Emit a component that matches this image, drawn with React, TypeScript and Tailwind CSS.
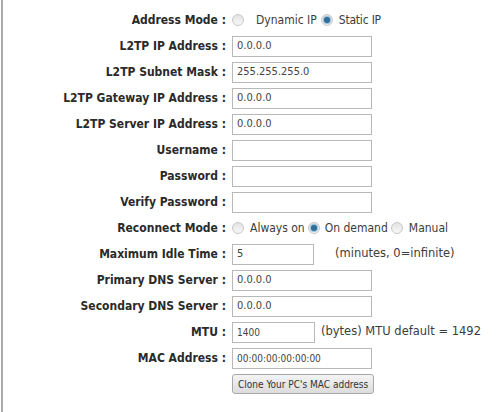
import React from "react";

const font = { fontFamily: '"DejaVu Sans Condensed", "DejaVu Sans", Tahoma, sans-serif' };
const wide = { fontFamily: '"DejaVu Sans", Verdana, sans-serif' };

function Radio({ checked }: { checked?: boolean }) {
  return (
    <span className="inline-flex h-[12px] w-[12px] shrink-0 items-center justify-center rounded-full border border-[#c8c8c8] bg-gradient-to-b from-[#e2e2e2] to-[#f8f8f8]">
      {checked ? <span className="h-[6px] w-[6px] rounded-full bg-[#2e6f9a] shadow-[0_0_1px_1px_#8fb8d6]" /> : null}
    </span>
  );
}

function Input({ value = "", w = "w-[140px]", small }: { value?: string; w?: string; small?: boolean }) {
  return (
    <div className={`${w} flex h-[21px] items-center border border-[#b8b8b8] bg-white pl-[4px] ${small ? "text-[10px]" : "text-[11px]"} text-[#444]`}>
      {value}
    </div>
  );
}

function Row({ label, children }: { label?: string; children: React.ReactNode }) {
  return (
    <div className="flex h-[26px] items-center">
      <div className="w-[223px] shrink-0 text-right text-[12px] font-bold text-[#2a2a2a]">{label}</div>
      <div className="ml-[6px] flex items-center whitespace-nowrap text-[12px] text-[#3c3c3c]">{children}</div>
    </div>
  );
}

export default function App() {
  return (
    <div className="h-[412px] w-[504px] overflow-hidden bg-white" style={font}>
      <div className="ml-[1px] h-full border-l-[2px] border-[#aaa] pt-[7px]">
        <Row label="Address Mode :">
          <Radio />
          <span className="ml-[12px] mr-[4px]">Dynamic IP</span>
          <Radio checked />
          <span className="ml-[6px] tracking-[-0.2px]">Static IP</span>
        </Row>
        <Row label="L2TP IP Address :"><Input value="0.0.0.0" /></Row>
        <Row label="L2TP Subnet Mask :"><Input value="255.255.255.0" /></Row>
        <Row label="L2TP Gateway IP Address :"><Input value="0.0.0.0" /></Row>
        <Row label="L2TP Server IP Address :"><Input value="0.0.0.0" /></Row>
        <Row label="Username :"><Input /></Row>
        <Row label="Password :"><Input /></Row>
        <Row label="Verify Password :"><Input /></Row>
        <Row label="Reconnect Mode :">
          <Radio />
          <span className="ml-[6px] mr-[3px]">Always on</span>
          <Radio checked />
          <span className="ml-[5px] mr-[3px]">On demand</span>
          <Radio />
          <span className="ml-[6px]">Manual</span>
        </Row>
        <Row label="Maximum Idle Time :">
          <Input value="5" w="w-[82px]" />
          <span className="ml-[21px] text-[11.5px]" style={wide}>(minutes, 0=infinite)</span>
        </Row>
        <Row label="Primary DNS Server :"><Input value="0.0.0.0" /></Row>
        <Row label="Secondary DNS Server :"><Input value="0.0.0.0" /></Row>
        <Row label="MTU :">
          <Input value="1400" w="w-[83px]" small />
          <span className="ml-[6px] text-[11.5px]" style={wide}>(bytes) MTU default = 1492</span>
        </Row>
        <Row label="MAC Address :"><Input value="00:00:00:00:00:00" small /></Row>
        <Row>
          <button className="flex h-[20px] items-center rounded-[3px] border border-[#a8a8a8] bg-gradient-to-b from-[#f4f4f4] to-[#dcdcdc] px-[5px] text-[10px] text-[#333]">
            Clone Your PC's MAC address
          </button>
        </Row>
      </div>
    </div>
  );
}
